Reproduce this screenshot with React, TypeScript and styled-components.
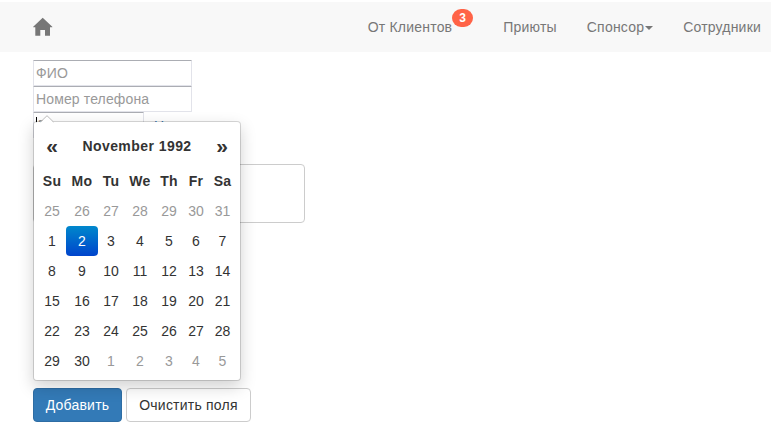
import React from "react";
import styled, { createGlobalStyle } from "styled-components";

const GlobalStyle = createGlobalStyle`
  * { box-sizing: border-box; }
  html, body { margin: 0; background: #fff; overflow: hidden; }
  body { font: 14px/20px "Liberation Sans", Arial, sans-serif; color: #333; }
`;

const Page = styled.div`
  height: 437px;
  padding-top: 2px;
`;
const Navbar = styled.nav`
  display: flex;
  justify-content: space-between;
  height: 50px;
  padding: 15px 10px 15px 33px;
  background: #f8f8f8;
  color: #777;
  letter-spacing: 0.2px;
`;
const HomeIcon = styled.svg`
  display: block;
  width: 20px;
  height: 20px;
`;
const NavLinks = styled.div`
  display: flex;
  gap: 30px;
`;
const NavLink = styled.a`
  display: flex;
  white-space: nowrap;
`;
const Badge = styled.span`
  width: 21px;
  height: 18px;
  margin-top: -8px;
  border-radius: 9px;
  background: #ff6347;
  color: #fff;
  font-size: 12px;
  font-weight: 700;
  line-height: 18px;
  text-align: center;
`;
const Caret = styled.span`
  align-self: center;
  border: 4px solid transparent;
  border-top-color: #777;
  border-bottom: 0;
  margin: 1px 0 0 1px;
`;
const Form = styled.form`
  display: flex;
  flex-direction: column;
  align-items: flex-start;
  margin: 8px 0 0 33px;
`;
const Input = styled.input<{ $width: number }>`
  width: ${(p) => p.$width}px;
  height: 26px;
  padding: 1px 2px;
  border: 1px solid #e2e3ea;
  border-top-color: #abadb3;
  border-radius: 1px;
  outline: 0;
  background: #fff;
  font: inherit;
  letter-spacing: 0.13px;
  color: #333;
  &::placeholder { color: #999; opacity: 1; }
`;
const DateRow = styled.div`
  position: relative;
  display: flex;
  align-items: center;
  gap: 10px;
  height: 26px;
`;
const DateLink = styled.a`
  color: #337ab7;
  padding-top: 1px;
`;
const TextCaret = styled.span`
  position: absolute;
  left: 3px;
  top: 5px;
  width: 1px;
  height: 16px;
  background: #000;
`;
const Comment = styled.textarea`
  width: 272px;
  height: 59px;
  margin: 26px 0 165px;
  border: 1px solid #ccc;
  border-radius: 4px;
  resize: none;
`;
const Actions = styled.div`
  display: flex;
  gap: 4px;
`;
const Button = styled.button<{ $primary?: boolean }>`
  width: ${(p) => (p.$primary ? 89 : 125)}px;
  height: 34px;
  padding: 0;
  border: 1px solid ${(p) => (p.$primary ? "#2e6da4" : "#ccc")};
  border-radius: 4px;
  background: ${(p) => (p.$primary ? "#337ab7" : "#fff")};
  color: ${(p) => (p.$primary ? "#fff" : "#333")};
  font: inherit;
  letter-spacing: 0.22px;
`;
const Picker = styled.div`
  position: absolute;
  z-index: 2;
  left: 0;
  top: 9px;
  width: 208px;
  height: 260px;
  padding: 4px;
  border: 1px solid rgba(0, 0, 0, 0.15);
  border-radius: 4px;
  background: #fff;
  background-clip: padding-box;
  box-shadow: 0 6px 16px rgba(0, 0, 0, 0.175);
`;
const Pointer = styled.svg`
  position: absolute;
  left: 6px;
  top: -7px;
  width: 14px;
  height: 8px;
`;
const PickerHead = styled.div`
  display: grid;
  grid-template-columns: 28px 1fr 28px;
  height: 40px;
  align-items: center;
  text-align: center;
  font-weight: 700;
  letter-spacing: 0.44px;
`;
const Arrow = styled.span`
  font-size: 21px;
  letter-spacing: 0;
`;
const Days = styled.div`
  display: grid;
  grid-template-columns: 28px 32px 26px 32px 26px 28px 25px;
  grid-auto-rows: 30px;
  line-height: 30px;
  text-align: center;
`;
const Weekday = styled.span`
  font-weight: 700;
  letter-spacing: 0.3px;
`;
const Day = styled.span<{ $muted: boolean; $active: boolean }>`
  border-radius: 4px;
  color: ${(p) => (p.$active ? "#fff" : p.$muted ? "#999" : "#333")};
  background: ${(p) => (p.$active ? "linear-gradient(#0088cc, #0044cc)" : "none")};
`;

const weekdays = ["Su", "Mo", "Tu", "We", "Th", "Fr", "Sa"];
const firstDay = new Date(1992, 9, 25);
const days = Array.from({ length: 42 }, (_, i) =>
  new Date(firstDay.getFullYear(), firstDay.getMonth(), firstDay.getDate() + i)
);

function DatePicker() {
  return (
    <Picker>
      <Pointer viewBox="0 0 14 8">
        <path d="M0.5 7.5L7 1L13.5 7.5V8H0.5Z" fill="#fff" />
        <path d="M0.5 7L7 0.7L13.5 7" fill="none" stroke="#bbb" />
      </Pointer>
      <PickerHead>
        <Arrow>«</Arrow>
        <span>November 1992</span>
        <Arrow>»</Arrow>
      </PickerHead>
      <Days>
        {weekdays.map((name) => <Weekday key={name}>{name}</Weekday>)}
        {days.map((day) => (
          <Day
            key={day.toDateString()}
            $muted={day.getMonth() !== 10}
            $active={day.getMonth() === 10 && day.getDate() === 2}
          >
            {day.getDate()}
          </Day>
        ))}
      </Days>
    </Picker>
  );
}

export default function App() {
  return (
    <Page>
      <GlobalStyle />
      <Navbar>
        <HomeIcon viewBox="0 0 20 20" fill="#777">
          <path d="M9.7 0.7L19.3 9.8V10.3H17V18.8H12V13H7.3V18.8H2.3V10.3H0.2V9.8Z" />
        </HomeIcon>
        <NavLinks>
          <NavLink>От Клиентов<Badge>3</Badge></NavLink>
          <NavLink>Приюты</NavLink>
          <NavLink>Спонсор<Caret /></NavLink>
          <NavLink>Сотрудники</NavLink>
        </NavLinks>
      </Navbar>
      <Form>
        <Input $width={159} placeholder="ФИО" />
        <Input $width={159} placeholder="Номер телефона" />
        <DateRow>
          <Input $width={111} placeholder="Дата" />
          <TextCaret />
          <DateLink>Н</DateLink>
          <DatePicker />
        </DateRow>
        <Comment />
        <Actions>
          <Button type="button" $primary>Добавить</Button>
          <Button type="reset">Очистить поля</Button>
        </Actions>
      </Form>
    </Page>
  );
}
